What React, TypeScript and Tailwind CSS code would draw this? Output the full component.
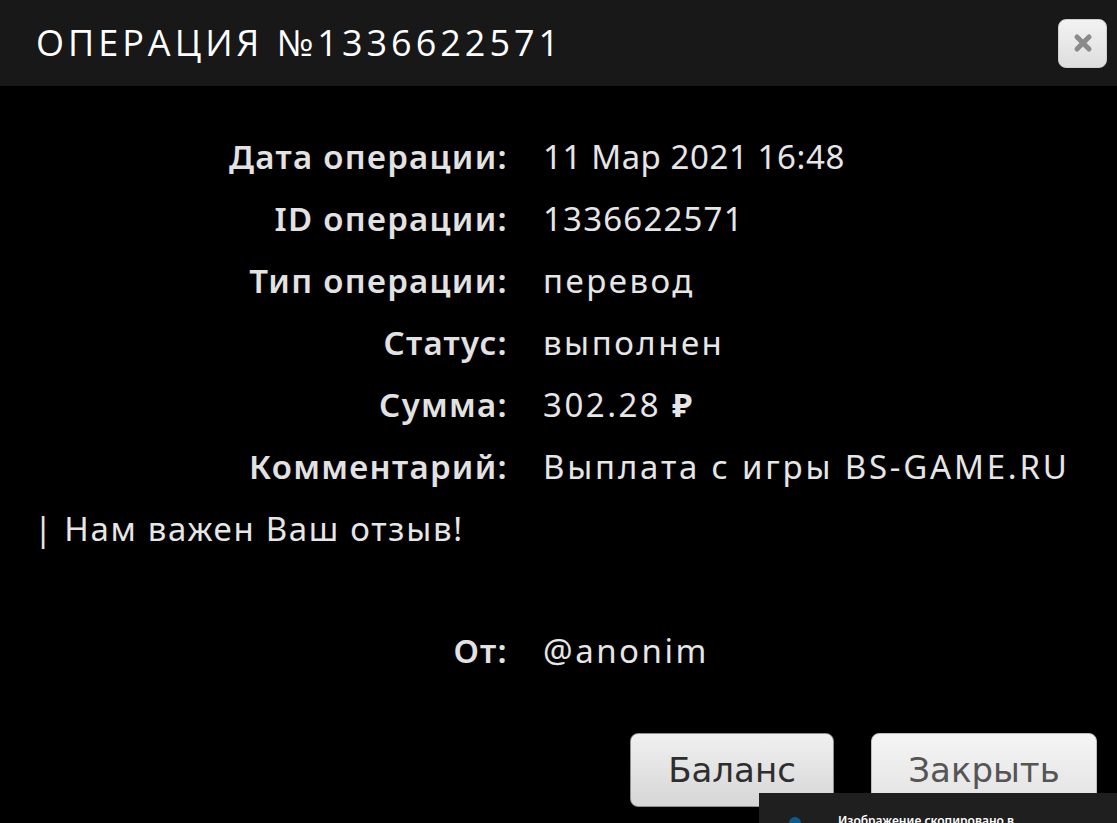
import React from "react";

const rows: [string, React.ReactNode, string][] = [
  ["Дата операции:", "11 Мар 2021 16:48", "tracking-[0.6px]"],
  ["ID операции:", "1336622571", "tracking-[1.2px]"],
  ["Тип операции:", "перевод", "tracking-[2.5px]"],
  ["Статус:", "выполнен", "tracking-[2.5px]"],
  ["Сумма:", <span>302.28 <span className="font-bold">₽</span></span>, "tracking-[2.5px]"],
  ["Комментарий:", "Выплата с игры BS-GAME.RU", "tracking-[2.8px]"],
];

function Row({ label, value, tr }: { label: string; value: React.ReactNode; tr: string }) {
  return (
    <div className="flex h-[62px] items-center">
      <div className="w-[508px] shrink-0 text-right font-semibold tracking-[1.3px] text-[#e2e2e2]">{label}</div>
      <div className={"pl-[35px] whitespace-nowrap text-[#e6e6e6] " + tr}>{value}</div>
    </div>
  );
}

export default function App() {
  return (
    <div className="relative w-[1117px] h-[823px] overflow-hidden bg-black" style={{ fontFamily: '"Noto Sans", sans-serif' }}>
      <div className="flex h-[86px] items-center justify-between bg-[#181818] pl-[36px] pr-[10px]">
        <div className="text-[36px] tracking-[4px] text-white" style={{ fontFamily: '"Open Sans", sans-serif' }}>
          ОПЕРАЦИЯ №1336622571
        </div>
        <div className="flex h-[49px] w-[49px] items-center justify-center rounded-[8px] border border-[#cfcfcf] bg-gradient-to-b from-[#f2f2f2] to-[#dedede]">
          <svg width="22" height="22" viewBox="0 0 22 22">
            <path d="M5 5 L17 17 M17 5 L5 17" stroke="#8a8a8a" strokeWidth="5" strokeLinecap="round" />
          </svg>
        </div>
      </div>
      <div className="pt-[39px] text-[33px] leading-none">
        {rows.map(([l, v, t]) => (
          <Row key={l} label={l} value={v} tr={t} />
        ))}
        <div className="flex h-[62px] items-center pl-[34px] tracking-[1.7px] text-[#e6e6e6]">| Нам важен Ваш отзыв!</div>
        <div className="h-[60px]" />
        <Row label="От:" value="@anonim" tr="tracking-[2.5px]" />
        <div className="mt-[52px] flex gap-[37px] pl-[630px]">
          <button className="h-[74px] w-[204px] rounded-[8px] border border-[#8f8f8f] bg-gradient-to-b from-[#f0f0f0] to-[#d6d6d6] text-[34px] text-[#2e2e2e]" style={{ fontFamily: '"DejaVu Sans", sans-serif' }}>
            Баланс
          </button>
          <button className="h-[74px] w-[226px] rounded-[8px] border border-[#bdbdbd] bg-gradient-to-b from-[#f5f5f5] to-[#e2e2e2] text-[34px] text-[#555]" style={{ fontFamily: '"DejaVu Sans", sans-serif' }}>
            Закрыть
          </button>
        </div>
      </div>
      <div className="absolute left-[759px] top-[793px] h-[60px] w-[358px] bg-[#1f1f1f]">
        <div className="absolute left-[30px] top-[24px] h-[10px] w-[12px] rounded-t-full bg-[#0b5c8c]" />
        <div className="absolute left-[79px] top-[22px] text-[12px] font-semibold leading-none text-white" style={{ fontFamily: '"Noto Sans", sans-serif' }}>
          Изображение скопировано в
        </div>
      </div>
    </div>
  );
}
